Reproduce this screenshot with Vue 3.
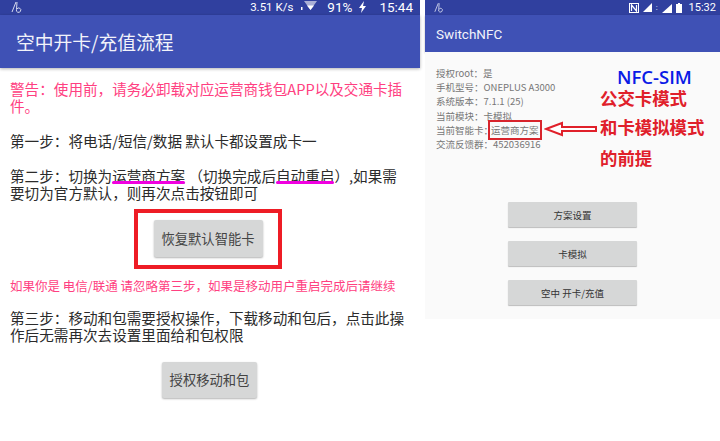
<script setup>
const infoRows = [
  { label: '授权root：', value: '是' },
  { label: '手机型号：', value: 'ONEPLUS A3000' },
  { label: '系统版本：', value: '7.1.1 (25)' },
  { label: '当前模块：', value: '卡模拟' },
  { label: '当前智能卡：', value: '运营商方案', boxed: true },
  { label: '交流反馈群：', value: '452036916' },
]

const actions = ['方案设置', '卡模拟', '空中 开卡/充值']
</script>

<template>
  <div class="page">
    <section class="phone phone-left">
      <div class="status-bar status-large">
        <svg class="notif" width="14" height="12" viewBox="0 0 14 12" fill="none" stroke="#d5d9ee" stroke-width="1">
          <path d="M1 11 5 1M6 1 5.500 8.500a2 2 0 0 0 4 1.500 2 2 0 0 0-3.500-2" />
        </svg>
        <span class="spacer"></span>
        <span class="speed">3.51 K/s</span>
        <svg class="wifi" width="18" height="11" viewBox="0 0 18 11">
          <path d="M3 0h13l-6.500 9z" fill="#a9afd6" />
          <path d="M6 4.500h7L9.500 9z" fill="#fff" />
          <rect x="0" y="6" width="1.500" height="3" fill="#fff" />
        </svg>
        <span class="battery">91%</span>
        <svg class="bolt" width="9" height="12" viewBox="0 0 9 12"><path d="M6 0 1 7h3l-1 5 5-7H5z" fill="#fff" /></svg>
        <span class="clock">15:44</span>
      </div>
      <header class="app-bar">空中开卡/充值流程</header>
      <div class="content">
        <p class="warning">警告：使用前，请务必卸载对应运营商钱包APP以及交通卡插件。</p>
        <p class="step step-one">第一步：将电话/短信/数据 默认卡都设置成卡一</p>
        <p class="step step-two">
          第二步：切换为<span class="marked">运营商方案</span> （切换完成后<span class="marked">自动重启</span>）,如果需要切为官方默认，则再次点击按钮即可
        </p>
        <div class="red-frame">
          <button type="button" class="btn btn-restore">恢复默认智能卡</button>
        </div>
        <p class="notice">如果你是 电信/联通 请忽略第三步，如果是移动用户重启完成后请继续</p>
        <p class="step step-three">第三步：移动和包需要授权操作，下载移动和包后，点击此操作后无需再次去设置里面给和包权限</p>
        <button type="button" class="btn btn-grant">授权移动和包</button>
      </div>
    </section>

    <section class="phone phone-right">
      <div class="status-bar status-small">
        <svg class="notif" width="12" height="11" viewBox="0 0 14 12" fill="none" stroke="#d5d9ee" stroke-width="1">
          <path d="M1 11 5 1M6 1 5.500 8.500a2 2 0 0 0 4 1.500 2 2 0 0 0-3.500-2" />
        </svg>
        <span class="spacer"></span>
        <svg width="10" height="10" viewBox="0 0 10 10">
          <rect x="0.500" y="0.500" width="9" height="9" fill="none" stroke="#fff" />
          <path d="M2.500 8V2l5 6V2" fill="none" stroke="#fff" stroke-width="1.200" />
        </svg>
        <svg width="9" height="9" viewBox="0 0 9 9"><path d="M0 9 9 0v9z" fill="#fff" /></svg>
        <span class="dots">:</span>
        <svg width="10" height="10" viewBox="0 0 10 10"><path d="M0 10 10 1v9z" fill="#fff" /></svg>
        <svg width="6" height="10" viewBox="0 0 6 10"><path d="M0 1h2V0h2v1h2v9H0z" fill="#fff" /></svg>
        <span class="clock-small">15:32</span>
      </div>
      <header class="app-bar-small">SwitchNFC</header>
      <div class="panel">
        <ul class="info">
          <li v-for="row in infoRows" :key="row.label">
            {{ row.label }}<span :class="{ boxed: row.boxed }">{{ row.value }}</span>
          </li>
        </ul>
        <div class="actions">
          <button v-for="action in actions" :key="action" type="button" class="btn-small">{{ action }}</button>
        </div>

        <div class="callout">
          <span class="nfc">NFC-SIM</span>
          <span class="red-note note-one">公交卡模式</span>
          <span class="red-note note-two">和卡模拟模式</span>
          <span class="red-note note-three">的前提</span>
          <svg class="arrow" width="54" height="16" viewBox="0 0 54 16">
            <path d="M2 8 18 2v4h34v4H18v4z" fill="#fff" stroke="#e0202a" stroke-width="2" />
          </svg>
        </div>
      </div>
    </section>
  </div>
</template>

<style>
html,
body {
  margin: 0;
  background: #fff;
  overflow: hidden;
}
</style>

<style scoped>
.page {
  display: flex;
  width: 720px;
  height: 441px;
  overflow: hidden;
  background: #fff;
  font-family: "Noto Sans CJK SC", "Noto Sans", sans-serif;
}

.phone-left {
  width: 420px;
  flex: none;
}

.phone-right {
  width: 295px;
  margin-left: 5px;
  flex: none;
}

.status-bar {
  display: flex;
  align-items: center;
  box-sizing: border-box;
  height: 15px;
  background: #30409f;
  color: #fff;
  font-family: Roboto, sans-serif;
  overflow: hidden;
}

.status-large {
  gap: 8px;
  padding: 0 7px 2px 11px;
  font-size: 13.500px;
}

.spacer {
  flex: 1;
}

.bolt {
  margin-left: -2px;
}

.clock {
  margin-left: 4px;
}

.speed {
  font-size: 11.500px;
}

.app-bar {
  display: flex;
  align-items: center;
  height: 53px;
  padding: 0 0 0 16px;
  background: #3f51b5;
  box-shadow: 0 1px 3px rgba(0, 0, 0, 0.3);
  color: #f2f3fa;
  font-size: 18.800px;
}

.content {
  padding: 12px 10px 0;
  color: #2b2b2b;
  font-size: 14.600px;
  line-height: 17.400px;
}

.content p {
  margin: 0;
}

.warning {
  color: #ff4081;
}

.step-one {
  margin-top: 17px !important;
}

.step-two {
  margin-top: 17.500px !important;
}

.marked {
  position: relative;
}

.marked::after {
  content: "";
  position: absolute;
  left: 0;
  right: 0;
  bottom: 1.500px;
  height: 3px;
  border-radius: 2px;
  background: #f000e0;
}

.red-frame {
  display: flex;
  align-items: center;
  justify-content: center;
  box-sizing: border-box;
  width: 148px;
  height: 60px;
  margin: 7px 0 0 124px;
  border: 4px solid #ee1c25;
}

.btn {
  border: none;
  border-radius: 2px;
  background: #d6d7d7;
  box-shadow: 0 1px 2px rgba(0, 0, 0, 0.3);
  color: #444;
  font-family: inherit;
  font-size: 13.300px;
  padding: 0;
}

.btn-restore {
  width: 109px;
  height: 37px;
}

.notice {
  margin-top: 8px !important;
  color: #ff4081;
  font-size: 12.500px;
}

.step-three {
  margin-top: 15px !important;
}

.btn-grant {
  display: block;
  width: 95px;
  height: 36px;
  margin: 18px 0 0 152px;
}

.status-small {
  gap: 4px;
  padding: 0 4px 0 9px;
  font-size: 12px;
}

.dots {
  font-size: 8px;
}

.clock-small {
  margin-left: 3px;
  font-size: 11px;
}

.app-bar-small {
  display: flex;
  align-items: center;
  height: 37px;
  padding-left: 11px;
  background: #3f51b5;
  box-shadow: 0 1px 2px rgba(0, 0, 0, 0.3);
  color: #f2f3fa;
  font-family: Roboto, sans-serif;
  font-size: 13.500px;
}

.panel {
  position: relative;
  box-sizing: border-box;
  height: 267px;
  padding: 14px 0 0 11px;
  background: #fafafa;
}

.info {
  margin: 0;
  padding: 0;
  list-style: none;
  color: #777;
  font-size: 9.500px;
  line-height: 14.200px;
}

.boxed {
  margin-left: -2px;
  outline: 2px solid #d8242c;
  outline-offset: 1px;
}

.actions {
  display: flex;
  flex-direction: column;
  gap: 14px;
  width: 129px;
  margin: 51px 0 0 72px;
}

.btn-small {
  height: 25px;
  padding: 0;
  border: none;
  border-radius: 1px;
  background: #d6d7d7;
  box-shadow: 0 1px 1px rgba(0, 0, 0, 0.25);
  color: #333;
  font-family: inherit;
  font-size: 9.500px;
}

/* annotations pasted on top of the screenshot */
.nfc {
  position: absolute;
  left: 192px;
  top: 14px;
  color: #0a1be6;
  font-family: "Open Sans", sans-serif;
  font-size: 18.500px;
  font-weight: 600;
  line-height: 22px;
}

.red-note {
  position: absolute;
  left: 175px;
  color: #e0202a;
  font-size: 17.400px;
  font-weight: 700;
  line-height: 22px;
  white-space: nowrap;
}

.note-one {
  top: 35px;
}

.note-two {
  top: 64px;
}

.note-three {
  top: 95px;
}

.arrow {
  position: absolute;
  left: 119px;
  top: 69px;
}
</style>
